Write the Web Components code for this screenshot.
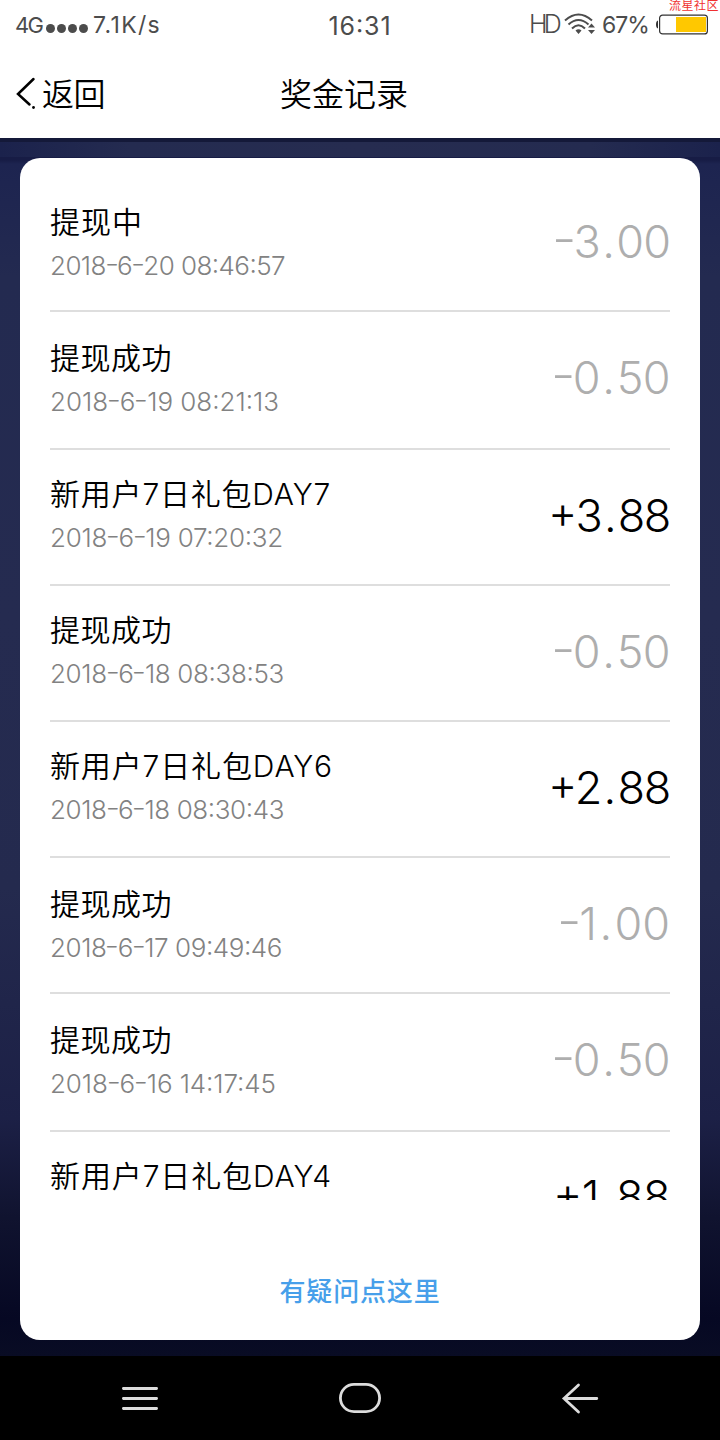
<!DOCTYPE html>
<html lang="zh">
<head>
<meta charset="UTF-8">
<title>奖金记录</title>
<style>
    body{
        margin: 0;
        width: 720px;
        height: 1440px;
        overflow: hidden;
        font-family: Inter, "Noto Sans CJK SC", sans-serif;
        background: #fff;
    }
</style>
</head>
<body>
<bonus-page></bonus-page>

<script>
function define(name, html, setup){
    const template = document.createElement('template');
    template.innerHTML = html;

    customElements.define(name, class extends HTMLElement{
        constructor(){
            super();
            this.attachShadow({ mode: 'open' });
            this.shadowRoot.appendChild(template.content.cloneNode(true));
        }
        connectedCallback(){
            if(setup) setup(this, this.shadowRoot);
        }
    });
}

// one line of text, letter-spaced to the given advance width
define('fit-text', `
    <style>
    :host{
        display: block;
        white-space: nowrap;
        font-feature-settings: "case";
    }
    span{
        display: inline-block;
    }
    ::slotted(i){
        display: inline-block;
        font-style: normal;
        transform: translateY(-0.03em) scaleX(1.2);
    }
    ::slotted(b){
        font-weight: inherit;
        margin: 0 0.055em;
    }
    </style>
    <span><slot></slot></span>
`, (el, root) => {
    const span = root.querySelector('span');
    const width = Number(el.getAttribute('width'));
    if(!width) return;
    const slotted = root.querySelector('slot').assignedNodes({ flatten: true });
    const count = slotted.map(node => node.textContent).join('').length;
    const gap = (width - span.getBoundingClientRect().width) / count;
    span.style.letterSpacing = gap + 'px';
});

define('status-bar', `
    <style>
    :host{
        display: grid;
        grid-template-columns: 1fr auto 1fr;
        height: 50px;
        box-sizing: border-box;
        padding: 0 12px 0 15px;
        align-items: center;
        color: #4c4c4c;
        font-size: 23px;
    }
    .side{
        display: flex;
        align-items: center;
    }
    .right{
        justify-content: flex-end;
    }
    .net{
        font-size: 22px;
        margin-bottom: 1px;
    }
    .dots{
        display: flex;
        gap: 2px;
        margin: 6px 5px 0 4px;
    }
    .dots i{
        width: 9px;
        height: 9px;
        border-radius: 50%;
        background: #4c4c4c;
    }
    .time{
        font-size: 25px;
        margin: 2px 3px 0 0;
    }
    .hd{
        font-size: 25px;
        font-weight: 300;
        margin-bottom: 2px;
    }
    svg{
        display: block;
    }
    .wifi{
        margin: 0 7px 2px 6px;
    }
    .battery{
        margin: 0 0 2px 7px;
    }
    </style>
    <div class="side">
        <fit-text class="net" width="27">4G</fit-text>
        <div class="dots"><i></i><i></i><i></i><i></i></div>
        <fit-text width="68">7.1K/s</fit-text>
    </div>
    <fit-text class="time" width="63">16:31</fit-text>
    <div class="side right">
        <fit-text class="hd" width="29">HD</fit-text>
        <svg class="wifi" width="31" height="22" viewBox="0 0 31 22" fill="none" stroke="#4c4c4c" stroke-width="2">
            <path d="M1 7.5Q14.500 -4.500 28 7.500M4.500 11.500Q14.500 2.500 24.500 11.500M8 15.500Q14.500 9 21 15.500"/>
            <path d="M11.500 17.500Q14.500 15 17.500 17.500L14.500 21ZM24 14.500L27.500 10.500 31 14.500ZM24 17L31 17 27.500 21Z" fill="#4c4c4c" stroke="none"/>
        </svg>
        <fit-text width="47">67%</fit-text>
        <svg class="battery" width="52" height="21" viewBox="0 0 52 21">
            <path d="M2 6.500Q0 7 0 10.500T2 14.500Z" fill="#333"/>
            <rect x="3.600" y="1.100" width="47.800" height="18.800" rx="3" fill="#fff" stroke="#333" stroke-width="1.200"/>
            <rect x="20" y="3" width="30" height="15" fill="#ffc800"/>
        </svg>
    </div>
`);

define('title-bar', `
    <style>
    :host{
        display: grid;
        grid-template-columns: 280px 1fr;
        height: 88px;
        align-items: center;
        font-size: 32px;
        font-weight: 350;
        line-height: 48px;
        color: #000;
    }
    .back{
        display: flex;
        align-items: center;
        padding-left: 15px;
    }
    svg{
        margin: 0 6px 3px 0;
    }
    fit-text{
        margin-top: 2px;
    }
    </style>
    <div class="back">
        <svg width="21" height="34" viewBox="0 0 21 34">
            <path d="M18.500 3L3 18 14.500 28.500" fill="none" stroke="#000" stroke-width="2.500" stroke-linecap="round"/>
            <circle cx="18.500" cy="31.500" r="1.400"/>
        </svg>
        <fit-text width="63">返回</fit-text>
    </div>
    <fit-text width="128"><slot></slot></fit-text>
`);

define('bonus-row', `
    <style>
    :host{
        display: flex;
        justify-content: space-between;
        box-sizing: border-box;
        height: var(--h, 136px);
        border-bottom: 2px solid #dedede;
        color: #000;
    }
    .info{
        padding-top: var(--t, 21px);
    }
    .name{
        font-size: 30px;
        line-height: 46px;
        font-weight: 350;
    }
    .date{
        margin-top: 6px;
        font-size: 26px;
        line-height: 30px;
        font-weight: 300;
        color: #828282;
    }
    .amount{
        padding-top: var(--a, 36px);
        font-size: 45px;
        line-height: 60px;
        font-weight: 300;
    }
    .out{
        color: #aeaeae;
    }
    </style>
    <div class="info"></div>
    <div class="right"></div>
`, (el, root) => {
    const amount = el.getAttribute('amount');
    const out = amount.startsWith('-') ? ' out' : '';
    root.querySelector('.info').innerHTML =
        line('name', el.getAttribute('name'), el.getAttribute('name-width')) +
        line('date', el.getAttribute('date'), el.getAttribute('date-width'));
    root.querySelector('.right').innerHTML = line('amount' + out, amount, el.getAttribute('amount-width'));
});

function line(cls, text, width){
    if(!text) return '';
    const html = text.replace(/-/g, '<i>-</i>').replace('.', '<b>.</b>');
    return `<fit-text class="${cls}" width="${width}">${html}</fit-text>`;
}

define('bonus-card', `
    <style>
    :host{
        display: flex;
        flex-direction: column;
        box-sizing: border-box;
        height: 1182px;
        padding: 18px 30px 0;
        border-radius: 20px;
        background: #fff;
    }
    .list{
        height: 1024px;
        overflow: hidden;
    }
    .help{
        align-self: center;
        margin-top: 72px;
        font-size: 26px;
        line-height: 40px;
        font-weight: 500;
        color: #479fea;
    }
    </style>
    <div class="list"><slot></slot></div>
    <fit-text class="help" width="161">有疑问点这里</fit-text>
`);

define('nav-bar', `
    <style>
    :host{
        display: grid;
        grid-template-columns: repeat(3, 220px);
        justify-content: center;
        justify-items: center;
        align-items: center;
        height: 84px;
        background: #000;
    }
    svg{
        fill: none;
        stroke: #dcdcdc;
        stroke-width: 2.800;
        stroke-linecap: round;
    }
    </style>
    <svg width="44" height="34"><path d="M5.400 7.500H38.600M5.400 17.500H38.600M5.400 27.500H38.600"/></svg>
    <svg width="44" height="34"><rect x="2.400" y="3.400" width="39.200" height="27.200" rx="13.600"/></svg>
    <svg width="44" height="34"><path d="M38.800 17.500H6M20.500 4L6 17.500 20.500 31"/></svg>
`);

define('bonus-page', `
    <style>
    :host{
        display: block;
        position: relative;
        width: 720px;
        height: 1440px;
        overflow: hidden;
    }
    main{
        box-sizing: border-box;
        height: 1218px;
        padding: 20px 20px 0;
        background:
            linear-gradient(#141939 4px, transparent 4px),
            linear-gradient(90deg, #1b224c, #242b50 18%, #262c50 50%, #242b50 82%, #1b224c) 0 0 / 100% 19px no-repeat,
            linear-gradient(#171c45 22px, #1d2450 26px, #232a50 140px, #252b50 480px, #242a4e 750px, #1c2046 980px, #10132f 1080px, #060823 1180px, #090c24 1218px);
    }
    .mark{
        position: absolute;
        top: 0;
        left: 669px;
        font-size: 12px;
        line-height: 12px;
        color: #f03030;
    }
    bonus-row:nth-child(1){ --t: 23px; }
    bonus-row:nth-child(2){ --h: 138px; --t: 23px; }
    bonus-row:nth-child(6){ --t: 23px; }
    bonus-row:nth-child(7){ --h: 138px; --t: 23px; }
    bonus-row:nth-child(8){ --a: 35px; }
    </style>
    <status-bar></status-bar>
    <title-bar>奖金记录</title-bar>
    <main>
        <bonus-card>
            <bonus-row name="提现中" name-width="93" date="2018-6-20 08:46:57" date-width="235" amount="-3.00" amount-width="116"></bonus-row>
            <bonus-row name="提现成功" name-width="122" date="2018-6-19 08:21:13" date-width="229" amount="-0.50" amount-width="117"></bonus-row>
            <bonus-row name="新用户7日礼包DAY7" name-width="281" date="2018-6-19 07:20:32" date-width="233" amount="+3.88" amount-width="122"></bonus-row>
            <bonus-row name="提现成功" name-width="122" date="2018-6-18 08:38:53" date-width="234" amount="-0.50" amount-width="117"></bonus-row>
            <bonus-row name="新用户7日礼包DAY6" name-width="283" date="2018-6-18 08:30:43" date-width="234" amount="+2.88" amount-width="122"></bonus-row>
            <bonus-row name="提现成功" name-width="122" date="2018-6-17 09:49:46" date-width="232" amount="-1.00" amount-width="111"></bonus-row>
            <bonus-row name="提现成功" name-width="122" date="2018-6-16 14:17:45" date-width="226" amount="-0.50" amount-width="117"></bonus-row>
            <bonus-row name="新用户7日礼包DAY4" name-width="282" amount="+1.88" amount-width="117"></bonus-row>
        </bonus-card>
    </main>
    <nav-bar></nav-bar>
    <fit-text class="mark" width="50">流星社区</fit-text>
`);
</script>
</body>
</html>
